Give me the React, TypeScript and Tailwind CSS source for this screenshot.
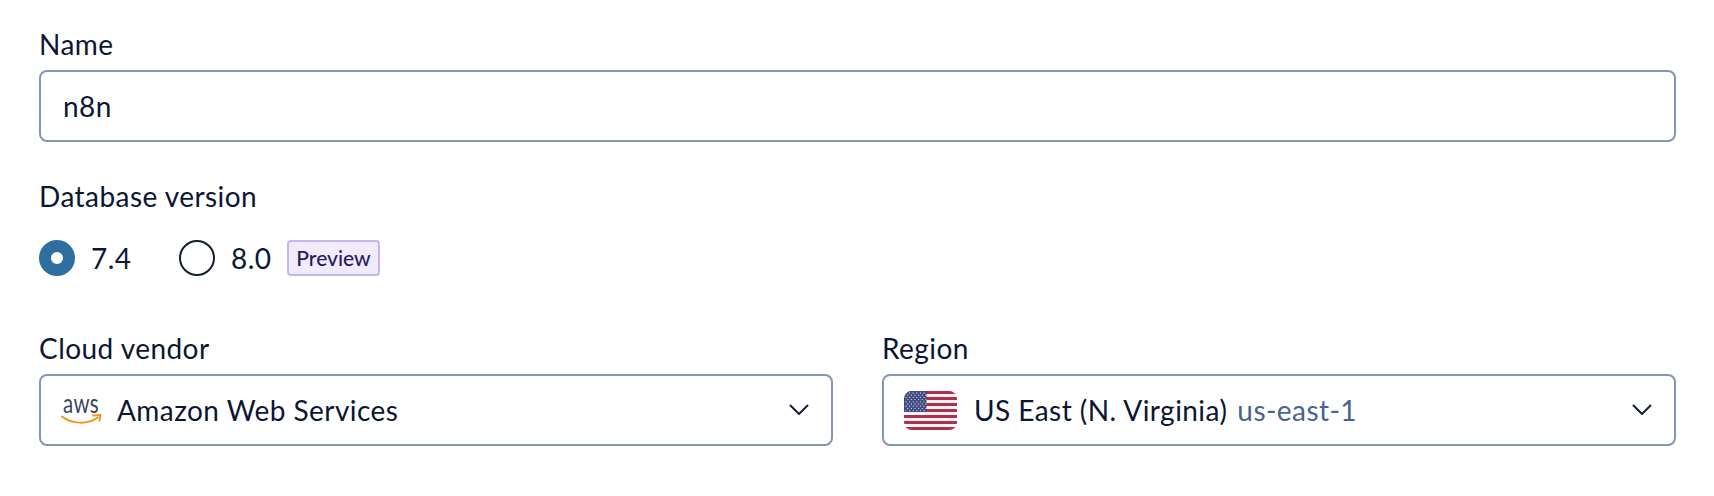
const fontStack = { fontFamily: 'Lato, "Noto Sans", sans-serif' };

function Chevron() {
  return (
    <svg width="20" height="12" viewBox="0 0 20 12" fill="none" className="shrink-0">
      <path d="M1.5 1.5 L10 10 L18.5 1.5" stroke="#161f3d" strokeWidth="2" strokeLinecap="round" strokeLinejoin="round" />
    </svg>
  );
}

function AwsLogo() {
  return (
    <svg width="50" height="46" viewBox="0 -7 50 46" fill="none" className="shrink-0">
      <text x="3" y="19" fontSize="27" fill="#3b4559" textLength="36" lengthAdjust="spacingAndGlyphs" style={{ fontFamily: "Lato, sans-serif" }}>
        aws
      </text>
      <path d="M2 22.5 C 12 30.5, 28 30.5, 38 23.5" stroke="#f2941f" strokeWidth="2" strokeLinecap="round" />
      <path d="M33 21.5 L40.5 21 L39.5 27" stroke="#f2941f" strokeWidth="1.8" strokeLinecap="round" strokeLinejoin="round" />
    </svg>
  );
}

function UsFlag() {
  const stripes = [0, 1, 2, 3, 4, 5, 6];
  const starRows = [0, 1, 2, 3, 4, 5, 6, 7, 8];
  const starCols = [0, 1, 2, 3, 4, 5];
  return (
    <svg width="53" height="39" viewBox="0 0 53 39" className="shrink-0">
      <defs>
        <clipPath id="flagClip">
          <rect width="53" height="39" rx="8" />
        </clipPath>
      </defs>
      <g clipPath="url(#flagClip)">
        <rect width="53" height="39" fill="#f6f4f4" />
        {stripes.map((i) => (
          <rect key={i} y={i * 6} width="53" height="3" fill="#b02f4c" />
        ))}
        <rect width="22.5" height="21" fill="#3f4a80" />
        {starRows.map((r) =>
          starCols.map((c) => (
            <circle key={`${r}-${c}`} cx={2 + c * 3.6 + (r % 2) * 1.8} cy={2 + r * 2.2} r="0.65" fill="#d5d9e8" />
          ))
        )}
      </g>
    </svg>
  );
}

export default function App() {
  return (
    <div className="w-[1714px] h-[496px] bg-white text-[#0b1633] pl-[39px] pr-[38px] pt-[28px] text-[28px] tracking-[0.45px]" style={fontStack}>
      <label className="block leading-[32px] mb-[10px]">Name</label>
      <div className="h-[72px] rounded-[8px] border-2 border-[#8496b3] flex items-center px-[22px]">n8n</div>

      <label className="block leading-[32px] mt-[38px] mb-[28px]">Database version</label>
      <div className="flex items-center h-[36px]">
        <span className="w-[36px] h-[36px] rounded-full bg-[#2f6f9f] flex items-center justify-center">
          <span className="w-[12px] h-[12px] rounded-full bg-white" />
        </span>
        <span className="ml-[16px] w-[88px]">7.4</span>
        <span className="w-[36px] h-[36px] rounded-full border-2 border-[#14202e]" />
        <span className="ml-[16px] w-[56px]">8.0</span>
        <span className="h-[36px] w-[93px] justify-center rounded-[4px] border-2 border-[#c6b5ee] bg-[#f0ebfb] text-[#2a1a5e] text-[21px] font-medium flex items-center tracking-normal">Preview</span>
      </div>

      <div className="grid grid-cols-2 gap-[49px] mt-[56px]">
        <div>
          <label className="block leading-[32px] mb-[10px]">Cloud vendor</label>
          <div className="h-[72px] rounded-[8px] border-2 border-[#8496b3] flex items-center pl-[19px] pr-[22px]">
            <AwsLogo />
            <span className="ml-[7px] flex-1">Amazon Web Services</span>
            <Chevron />
          </div>
        </div>
        <div>
          <label className="block leading-[32px] mb-[10px]">Region</label>
          <div className="h-[72px] rounded-[8px] border-2 border-[#8496b3] flex items-center pl-[20px] pr-[22px]">
            <UsFlag />
            <span className="ml-[17px]">US East (N. Virginia)</span>
            <span className="ml-[10px] flex-1 text-[#4a6291]">us-east-1</span>
            <Chevron />
          </div>
        </div>
      </div>
    </div>
  );
}
